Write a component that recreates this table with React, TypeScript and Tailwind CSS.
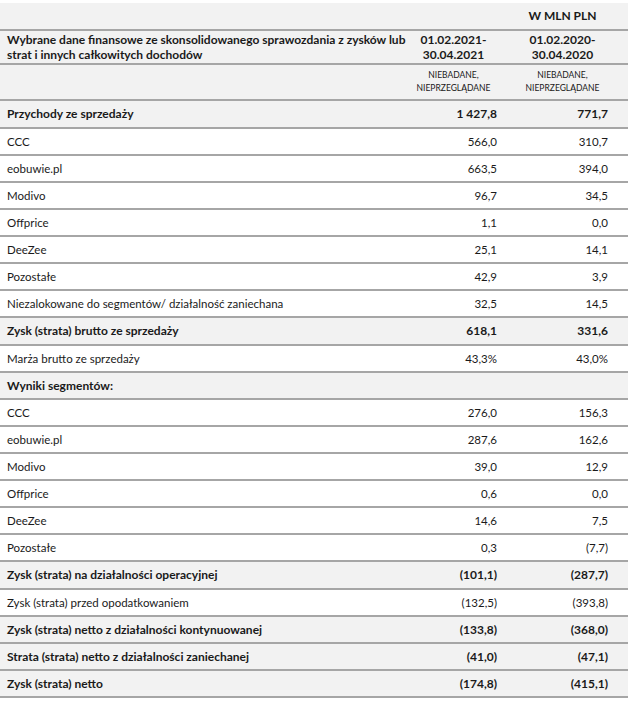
import React from 'react';

type Row = {
  label: string;
  a: string;
  b: string;
  strong?: boolean;
  tall?: boolean;
};

const rows: Row[] = [
  { label: 'Przychody ze sprzedaży', a: '1 427,8', b: '771,7', strong: true, tall: true },
  { label: 'CCC', a: '566,0', b: '310,7' },
  { label: 'eobuwie.pl', a: '663,5', b: '394,0' },
  { label: 'Modivo', a: '96,7', b: '34,5' },
  { label: 'Offprice', a: '1,1', b: '0,0' },
  { label: 'DeeZee', a: '25,1', b: '14,1' },
  { label: 'Pozostałe', a: '42,9', b: '3,9' },
  { label: 'Niezalokowane do segmentów/ działalność zaniechana', a: '32,5', b: '14,5' },
  { label: 'Zysk (strata) brutto ze sprzedaży', a: '618,1', b: '331,6', strong: true, tall: true },
  { label: 'Marża brutto ze sprzedaży', a: '43,3%', b: '43,0%' },
  { label: 'Wyniki segmentów:', a: '', b: '', strong: true },
  { label: 'CCC', a: '276,0', b: '156,3' },
  { label: 'eobuwie.pl', a: '287,6', b: '162,6' },
  { label: 'Modivo', a: '39,0', b: '12,9' },
  { label: 'Offprice', a: '0,6', b: '0,0' },
  { label: 'DeeZee', a: '14,6', b: '7,5' },
  { label: 'Pozostałe', a: '0,3', b: '(7,7)' },
  { label: 'Zysk (strata) na działalności operacyjnej', a: '(101,1)', b: '(287,7)', strong: true, tall: true },
  { label: 'Zysk (strata) przed opodatkowaniem', a: '(132,5)', b: '(393,8)' },
  { label: 'Zysk (strata) netto z działalności kontynuowanej', a: '(133,8)', b: '(368,0)', strong: true },
  { label: 'Strata (strata) netto z działalności zaniechanej', a: '(41,0)', b: '(47,1)', strong: true },
  { label: 'Zysk (strata) netto', a: '(174,8)', b: '(415,1)', strong: true },
];

const App = () => {
  return (
    <div
      className="w-[632px] h-[701px] bg-white pt-[3px] text-[#1a1a1a]"
      style={{ fontFamily: 'Lato, "Open Sans", sans-serif' }}
    >
      <div className="w-[628px]">
        <div className="flex h-[28px] items-center bg-[#f2f2f2] border-b-2 border-[#a6a6a6] text-[12px] font-bold">
          <div className="w-[410px]" />
          <div className="w-[95px]" />
          <div className="w-[123px] pr-2 text-center">W MLN PLN</div>
        </div>

        <div className="flex h-[34px] items-center bg-[#f2f2f2] border-b-2 border-[#a6a6a6] text-[12px] font-bold leading-[15px]">
          <div className="w-[410px] pl-[7px]">
            Wybrane dane finansowe ze skonsolidowanego sprawozdania z zysków lub
            <br />
            strat i innych całkowitych dochodów
          </div>
          <div className="w-[95px] pr-2 text-center">
            01.02.2021-
            <br />
            30.04.2021
          </div>
          <div className="w-[123px] pr-2 text-center">
            01.02.2020-
            <br />
            30.04.2020
          </div>
        </div>

        <div className="flex h-[36px] items-center bg-[#f2f2f2] border-b-2 border-[#a6a6a6] text-[8.5px] leading-[13px] uppercase">
          <div className="w-[410px]" />
          <div className="w-[95px] pr-2 text-center">
            Niebadane,
            <br />
            nieprzeglądane
          </div>
          <div className="w-[123px] pr-2 text-center">
            Niebadane,
            <br />
            nieprzeglądane
          </div>
        </div>

        {rows.map((r, i) => (
          <div
            key={i}
            className={
              'flex items-center border-b-2 border-[#a6a6a6] ' +
              (r.tall ? 'h-[28px] ' : 'h-[27px] ') +
              (r.strong ? 'bg-[#f2f2f2] font-bold text-[12px]' : 'bg-white text-[11.5px]')
            }
          >
            <div className="w-[410px] pl-[7px] whitespace-nowrap">{r.label}</div>
            <div className="w-[95px] pr-2 text-right">{r.a}</div>
            <div className="w-[123px] pr-5 text-right">{r.b}</div>
          </div>
        ))}
      </div>
    </div>
  );
};

export default App;
